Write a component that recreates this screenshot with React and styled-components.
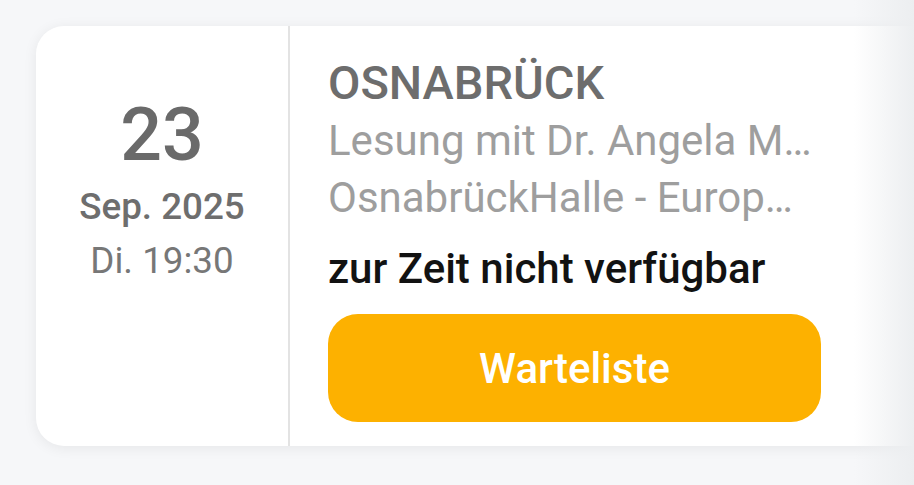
import React from 'react';
import styled, { createGlobalStyle } from 'styled-components';

const GlobalStyle = createGlobalStyle`
  html, body {
    margin: 0;
    padding: 0;
    background: #f6f7f9;
    font-family: Roboto, "Noto Sans", "Liberation Sans", sans-serif;
    overflow: hidden;
  }
`;

const event = {
  day: '23',
  month: 'Sep. 2025',
  time: 'Di. 19:30',
  city: 'OSNABRÜCK',
  title: 'Lesung mit Dr. Angela Merkel - Freiheit',
  venue: 'OsnabrückHalle - Europasaal',
  status: 'zur Zeit nicht verfügbar',
  action: 'Warteliste',
};

export default function App() {
  return (
    <>
      <GlobalStyle />
      <Page>
        <EventCard>
          <DateColumn>
            <Day>{event.day}</Day>
            <Month>{event.month}</Month>
            <Time>{event.time}</Time>
          </DateColumn>
          <InfoColumn>
            <City>{event.city}</City>
            <Detail>{event.title}</Detail>
            <Detail>{event.venue}</Detail>
            <Status>{event.status}</Status>
            <ActionButton type="button">{event.action}</ActionButton>
          </InfoColumn>
        </EventCard>
        <EdgeFade />
      </Page>
    </>
  );
}

const Page = styled.div`
  position: relative;
  width: 914px;
  height: 485px;
  overflow: hidden;
  padding: 26px 0 0 36px;
  box-sizing: border-box;
`;

const EventCard = styled.div`
  display: flex;
  width: max-content;
  height: 420px;
  background: #ffffff;
  border-radius: 28px;
  box-shadow: 0 2px 14px rgba(0, 0, 0, 0.07);
  overflow: hidden;
`;

const DateColumn = styled.div`
  width: 254px;
  display: flex;
  flex-direction: column;
  align-items: center;
  padding-top: 66px;
  box-sizing: border-box;
  border-right: 2px solid #e3e3e3;
`;

const Day = styled.div`
  font-size: 73.5px;
  line-height: 86px;
  font-weight: 500;
  color: #6a6a6a;
`;

const Month = styled.div`
  margin-top: 2px;
  font-size: 36.75px;
  line-height: 54px;
  font-weight: 500;
  color: #6e6e6e;
`;

const Time = styled.div`
  font-size: 36.75px;
  line-height: 54px;
  font-weight: 400;
  color: #777777;
`;

const InfoColumn = styled.div`
  display: flex;
  flex-direction: column;
  padding: 27px 140px 0 38px;
`;

const City = styled.div`
  font-size: 47px;
  line-height: 59px;
  font-weight: 500;
  color: #6d6d6d;
`;

const Detail = styled.div`
  max-width: 484px;
  font-size: 42px;
  line-height: 57px;
  color: #9e9e9e;
  white-space: nowrap;
  overflow: hidden;
  text-overflow: ellipsis;
`;

const Status = styled.div`
  margin-top: 14px;
  font-size: 42px;
  line-height: 57px;
  font-weight: 500;
  color: #121212;
`;

const ActionButton = styled.button`
  margin-top: 17px;
  width: 493px;
  height: 108px;
  border: none;
  border-radius: 30px;
  background: #fdb100;
  color: #ffffff;
  font-family: inherit;
  font-size: 42px;
  font-weight: 500;
  cursor: pointer;
`;

const EdgeFade = styled.div`
  position: absolute;
  top: 0;
  right: 0;
  bottom: 0;
  width: 60px;
  background: linear-gradient(to right, rgba(238, 240, 242, 0), rgba(236, 238, 240, 1));
  pointer-events: none;
`;
